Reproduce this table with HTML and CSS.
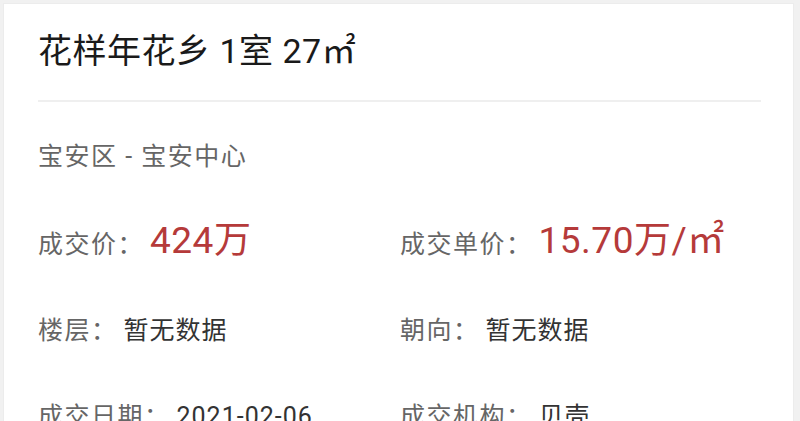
FILE: index.html
```html
<!DOCTYPE html>
<html lang="zh">
<head>
<meta charset="utf-8">
<link rel="stylesheet" href="styles.css">
</head>
<body>
<div class="card">
  <h1 class="title">花样年花乡 1室 27㎡</h1>
  <div class="divider"></div>
  <div class="area">宝安区 - 宝安中心</div>
  <div class="grid">
    <div class="item"><span class="label">成交价：</span><span class="price">424万</span></div>
    <div class="item"><span class="label">成交单价：</span><span class="price">15.70万/㎡</span></div>
    <div class="item"><span class="label">楼层：</span><span class="value">暂无数据</span></div>
    <div class="item"><span class="label">朝向：</span><span class="value">暂无数据</span></div>
    <div class="item"><span class="label">成交日期：</span><span class="value">2021-02-06</span></div>
    <div class="item"><span class="label">成交机构：</span><span class="value">贝壳</span></div>
  </div>
</div>
</body>
</html>
```

FILE: styles.css
```css
html, body {
  margin: 0;
  padding: 0;
  background: #f1f1f1;
  overflow: hidden;
  height: 421px;
}
body {
  font-family: "Roboto", "Noto Sans CJK SC", sans-serif;
  padding: 3px 6px 0 3px;
}
.card {
  background: #fff;
  border: 1px solid #ececec;
  border-bottom: none;
  height: 430px;
  padding: 0 32px 0 34px;
}
.title {
  margin: 0;
  padding-top: 23px;
  font-size: 34px;
  font-weight: 400;
  letter-spacing: 0.5px;
  color: #1a1a1a;
  line-height: 48px;
  height: 48px;
}
.divider {
  margin-top: 25px;
  height: 2px;
  background: #efefef;
}
.area {
  margin-top: 38px;
  font-size: 25px;
  letter-spacing: 1.5px;
  color: #666;
  line-height: 34px;
}
.grid {
  display: grid;
  grid-template-columns: 362px 1fr;
  grid-auto-rows: 86px;
  margin-top: 46px;
}
.item {
  font-size: 25px;
  line-height: 50px;
  height: 50px;
  white-space: nowrap;
}
.label {
  color: #666;
  letter-spacing: 1.5px;
}
.price {
  font-size: 37px;
  line-height: 1;
  letter-spacing: 0.5px;
  color: #b53a3a;
  margin-left: 6px;
}
.value {
  color: #333;
  letter-spacing: 1px;
  margin-left: 6px;
}
```
